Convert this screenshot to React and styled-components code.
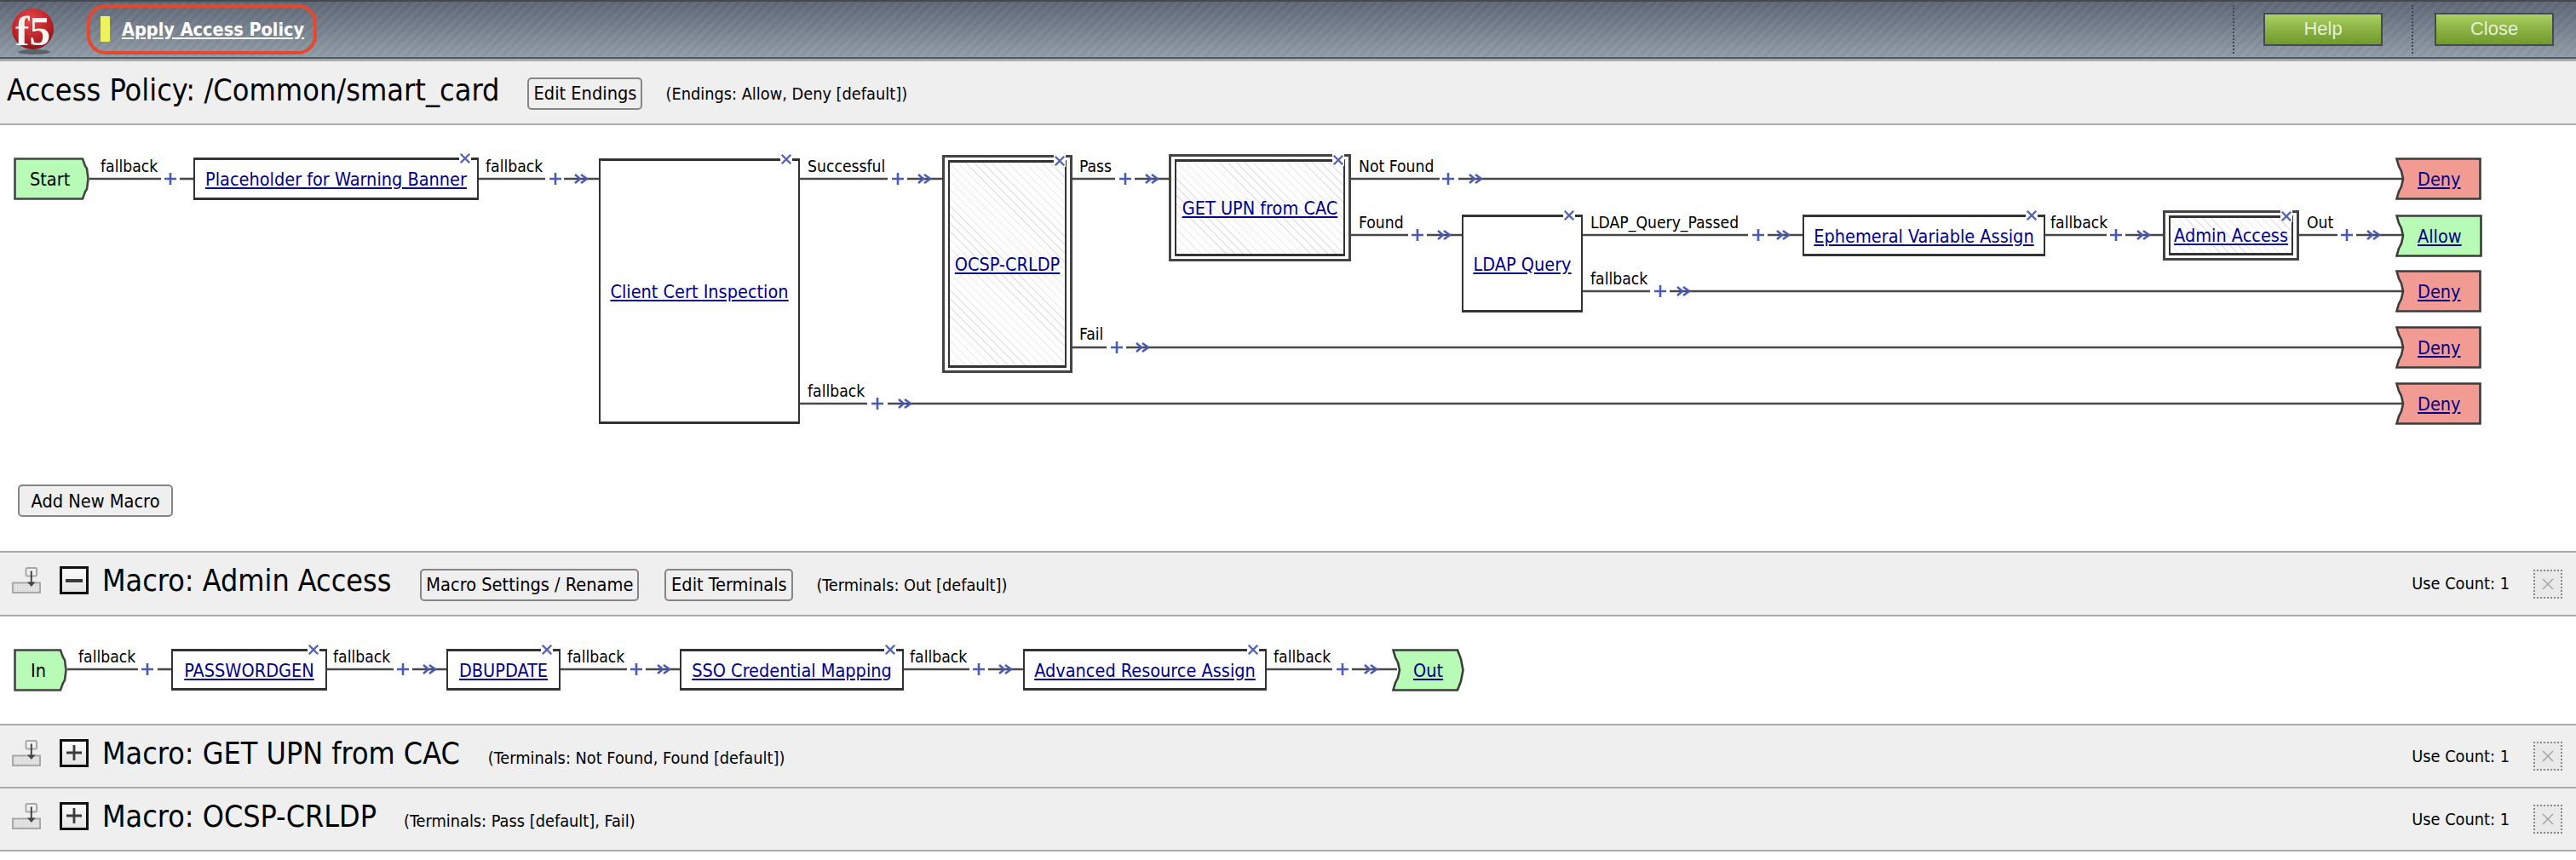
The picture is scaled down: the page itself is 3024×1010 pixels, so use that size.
import React from "react";
import styled, { createGlobalStyle } from "styled-components";

const UI_FONT = `"DejaVu Sans Condensed", "DejaVu Sans", sans-serif`;

const Global = createGlobalStyle`
  html, body { margin: 0; padding: 0; background: #fff; }
  body { font-family: ${UI_FONT}; color: #000; }
  #root { width: 3024px; height: 1010px; overflow: hidden; }
  * { box-sizing: border-box; }
`;

const Page = styled.div`
  display: flex;
  flex-direction: column;
  width: 3024px;
`;

const Banner = styled.header`
  display: flex;
  align-items: center;
  height: 72px;
  padding: 0 26px 3px 14px;
  border-top: 2px solid #45494f;
  border-bottom: 3px solid #aaaaaa;
  box-shadow: inset 0 -2px 0 #4d5966;
  background:
    repeating-linear-gradient(135deg, rgba(255,255,255,0.035) 0 4px, rgba(0,0,0,0.025) 4px 8px),
    linear-gradient(180deg, #5d6776 0%, #939ea9 100%);
`;

const LogoMark = styled.svg`
  width: 52px;
  height: 62px;
  flex: none;
  overflow: visible;
`;

const ApplyChip = styled.div`
  display: flex;
  align-items: center;
  gap: 14px;
  width: 270px;
  height: 59px;
  margin-left: 36px;
  padding-left: 12px;
  border: 4px solid #e8472b;
  border-radius: 22px;
`;

const ApplyFlag = styled.span`
  width: 11px;
  height: 30px;
  background: #eef25c;
`;

const ApplyLink = styled.a`
  color: #fff;
  font-size: 21.5px;
  font-weight: 700;
  text-decoration: underline;
  white-space: nowrap;
`;

const Spacer = styled.div`
  flex: 1;
`;

const BannerDivider = styled.span`
  width: 0;
  height: 57px;
  margin-right: ${(p) => p.$gap}px;
  border-left: 2px dotted #3e4650;
`;

const BannerButton = styled.button`
  width: 140px;
  height: 39px;
  margin-right: ${(p) => p.$after}px;
  padding: 0;
  border: 2px solid #444a4f;
  background: linear-gradient(180deg, #a9d163 0%, #8cb546 45%, #6f9a2c 100%);
  color: #e6efd3;
  font-family: "Liberation Sans", Arial, sans-serif;
  font-size: 22px;
`;

const TitleBar = styled.div`
  display: flex;
  align-items: center;
  height: 75px;
  padding: 0 0 0 8px;
  background: #efefef;
  border-bottom: 2px solid #aaaaaa;
`;

const PageTitle = styled.h1`
  margin: 0 33px 0 0;
  font-size: 35.8px;
  font-weight: 400;
  white-space: nowrap;
  position: relative;
  top: -3px;
`;

const GhostButton = styled.button`
  height: 38px;
  width: ${(p) => p.$w}px;
  margin-top: 2px;
  margin-right: ${(p) => p.$after}px;
  padding: 0;
  background: #efefef;
  border: 2px solid #858585;
  border-radius: 5px;
  color: #000;
  font-family: ${UI_FONT};
  font-size: 21.6px;
  white-space: nowrap;
`;

const Note = styled.span`
  margin-top: 4px;
  font-size: 19.8px;
  white-space: nowrap;
`;

const MainArea = styled.section`
  height: 500px;
  background: #fff;
`;

const Diagram = styled.div`
  position: relative;
  height: ${(p) => p.$h}px;
`;

const MacroFoot = styled.div`
  padding-left: 21px;
`;

const Wires = styled.svg`
  position: absolute;
  left: 0;
  top: 0;
  pointer-events: none;
`;

const Step = styled.div`
  position: absolute;
  left: ${(p) => p.$x}px;
  top: ${(p) => p.$y}px;
  width: ${(p) => p.$w}px;
  height: ${(p) => p.$h}px;
  display: flex;
  align-items: center;
  justify-content: center;
  padding-top: 1px;
  background: #fff;
  border: 2px solid #333;
  border-top-width: 3px;
  border-bottom-width: 3px;
`;

const MacroStep = styled(Step)`
  padding: 3px 4px;
  background: #fff;
  border-width: 3px;
  border-color: #444;
`;

const MacroInner = styled.div`
  display: flex;
  align-items: center;
  justify-content: center;
  width: 100%;
  height: 100%;
  border: 2px solid #333;
  border-top-width: 3px;
  border-bottom-width: 3px;
  background: repeating-linear-gradient(45deg, #fff 0 6px, #e4e4e4 6px 7px);
`;

const StepLink = styled.a`
  color: #00008b;
  font-size: 21.5px;
  text-decoration: underline;
  white-space: nowrap;
`;

const Remove = styled.svg`
  position: absolute;
  top: ${(p) => p.$top}px;
  right: ${(p) => p.$right}px;
  width: 14px;
  height: 14px;
  background: #fff;
`;

const Terminal = styled.div`
  position: absolute;
  left: ${(p) => p.$x}px;
  top: ${(p) => p.$y}px;
  width: ${(p) => p.$w}px;
  height: 50px;
  display: flex;
  align-items: center;
  padding-left: ${(p) => p.$pad}px;
  padding-top: 1px;
  font-size: 21.5px;
`;

const TerminalShape = styled.svg`
  position: absolute;
  left: 0;
  top: 0;
  width: 100%;
  height: 100%;
`;

const TerminalText = styled.span`
  position: relative;
`;

const TerminalLink = styled(StepLink)`
  position: relative;
`;

const EdgeLabel = styled.span`
  position: absolute;
  left: ${(p) => p.$x}px;
  top: ${(p) => p.$y}px;
  font-size: 19.2px;
  line-height: 22px;
  white-space: nowrap;
`;

const MacroBar = styled.div`
  display: flex;
  align-items: center;
  height: ${(p) => p.$h}px;
  padding: 0 16px 0 14px;
  background: #efefef;
  border-top: ${(p) => (p.$top ? "2px solid #aaaaaa" : "0")};
  border-bottom: 2px solid #aaaaaa;
`;

const GlyphSlot = styled.svg`
  width: 34px;
  height: 31px;
  margin-bottom: 8px;
  flex: none;
`;

const ToggleBox = styled.span`
  display: flex;
  align-items: center;
  justify-content: center;
  width: 34px;
  height: 33px;
  margin: 0 16px 8px 22px;
  border: 3px solid #111;
  background: linear-gradient(180deg, #fbfbfb, #e4e4e4);
`;

const MacroTitle = styled.h2`
  margin: 0 ${(p) => p.$after}px 0 0;
  font-size: 35.6px;
  font-weight: 400;
  white-space: nowrap;
  position: relative;
  top: -4px;
`;

const UseCount = styled.span`
  margin-right: 28px;
  font-size: 19.8px;
  white-space: nowrap;
`;

const DeleteBox = styled.span`
  display: flex;
  align-items: center;
  justify-content: center;
  width: 34px;
  height: 34px;
  border: 2px dotted #888;
  background: #e9e9e9;
`;

const F5Logo = () => (
  <LogoMark viewBox="0 0 52 62">
    <defs>
      <radialGradient id="f5ball" cx="0.42" cy="0.28" r="0.78">
        <stop offset="0" stopColor="#e6474a" />
        <stop offset="0.6" stopColor="#bb2226" />
        <stop offset="1" stopColor="#7f1216" />
      </radialGradient>
    </defs>
    <ellipse cx="26" cy="58" rx="19" ry="3" fill="#3a3d43" opacity="0.6" />
    <ellipse cx="24.5" cy="31" rx="24.5" ry="24" fill="url(#f5ball)" />
    <text x="4" y="50" fontFamily="Liberation Serif, serif" fontWeight="700" fontSize="48" fill="#f8f4f2" textLength="41" lengthAdjust="spacingAndGlyphs">f5</text>
  </LogoMark>
);

const RemoveIcon = ({ top = -9, right = 7 }) => (
  <Remove viewBox="0 0 16 16" $top={top} $right={right}>
    <path d="M2 2 L14 14 M14 2 L2 14" stroke="#5564b5" strokeWidth="2.8" fill="none" />
  </Remove>
);

const Plus = ({ x, y }) => (
  <path d={`M${x - 7} ${y} H${x + 7} M${x} ${y - 7} V${y + 7}`} stroke="#4a5bb5" strokeWidth="2.6" fill="none" />
);

const Chevrons = ({ x, y }) => (
  <path d={`M${x - 8} ${y - 5} L${x - 2} ${y} L${x - 8} ${y + 5} M${x - 1} ${y - 5} L${x + 6} ${y} L${x - 1} ${y + 5}`} stroke="#4a5bb5" strokeWidth="2.6" fill="none" />
);

const WireLayer = ({ w, h, offset, lines, pluses, arrows }) => (
  <Wires width={w} height={h} viewBox={`0 ${offset} ${w} ${h}`}>
    {lines.map(([x1, x2, y], i) => (
      <line key={i} x1={x1} x2={x2} y1={y} y2={y} stroke="#484848" strokeWidth="2.6" />
    ))}
    {pluses.map(([x, y], i) => (
      <Plus key={i} x={x} y={y} />
    ))}
    {arrows.map(([x, y], i) => (
      <Chevrons key={i} x={x} y={y} />
    ))}
  </Wires>
);

const StartShape = ({ w, fill }) => (
  <TerminalShape viewBox={`0 0 ${w} 50`}>
    <path
      d={`M1.5 1.5 H${w - 8} L${w - 5} 10 L${w - 3} 13 L${w - 1.5} 25 L${w - 3} 37 L${w - 5} 40 L${w - 8} 48.5 H1.5 Z`}
      fill={fill}
      stroke="#444"
      strokeWidth="2.6"
    />
  </TerminalShape>
);

const EndShape = ({ w, fill }) => (
  <TerminalShape viewBox={`0 0 ${w} 50`}>
    <path
      d={`M1.5 1.5 H${w - 1.5} V48.5 H1.5 L4 40 L7 34 L9 25 L7 16 L4 10 Z`}
      fill={fill}
      stroke="#3c3c3c"
      strokeWidth="2.6"
    />
  </TerminalShape>
);

const SOURCE = "#b7fbb6";
const DENY = "#f29b93";

const MAIN_TOP = 147;
const mainSteps = [
  { x: 227, y: 185, w: 335, h: 50, label: "Placeholder for Warning Banner" },
  { x: 703, y: 186, w: 236, h: 312, label: "Client Cert Inspection" },
  { x: 1716, y: 252, w: 142, h: 115, label: "LDAP Query" },
  { x: 2116, y: 252, w: 285, h: 49, label: "Ephemeral Variable Assign" },
];
const mainMacros = [
  { x: 1106, y: 182, w: 153, h: 256, label: "OCSP-CRLDP" },
  { x: 1372, y: 181, w: 214, h: 126, label: "GET UPN from CAC" },
  { x: 2539, y: 247, w: 160, h: 59, label: "Admin Access" },
];
const mainEnds = [
  { y: 185, w: 101, label: "Deny", fill: DENY },
  { y: 252, w: 102, label: "Allow", fill: SOURCE },
  { y: 317, w: 101, label: "Deny", fill: DENY },
  { y: 383, w: 101, label: "Deny", fill: DENY },
  { y: 449, w: 101, label: "Deny", fill: DENY },
];
const mainLabels = [
  ["fallback", 118, 196], ["fallback", 570, 196], ["Successful", 948, 196],
  ["fallback", 948, 460], ["Pass", 1267, 196], ["Fail", 1267, 393],
  ["Not Found", 1595, 196], ["Found", 1595, 262], ["LDAP_Query_Passed", 1867, 262],
  ["fallback", 1867, 328], ["fallback", 2407, 262], ["Out", 2708, 262],
];
const mainLines = [
  [105, 189, 210], [211, 228, 210], [562, 640, 210], [662, 703, 210],
  [939, 1042, 210], [1065, 1106, 210], [939, 1018, 474], [1042, 2821, 474],
  [1259, 1309, 210], [1332, 1372, 210], [1259, 1299, 408], [1322, 2821, 408],
  [1586, 1690, 210], [1712, 2821, 210], [1586, 1653, 276], [1675, 1716, 276],
  [1858, 2052, 276], [2075, 2116, 276], [1858, 1937, 342], [1960, 2821, 342],
  [2401, 2473, 276], [2495, 2539, 276], [2699, 2744, 276], [2766, 2821, 276],
];
const mainPluses = [
  [200, 210], [652, 210], [1054, 210], [1030, 474], [1321, 210], [1311, 408],
  [1700, 210], [1664, 276], [2064, 276], [1949, 342], [2484, 276], [2755, 276],
];
const mainArrows = [
  [683, 210], [1086, 210], [1063, 474], [1353, 210], [1342, 408], [1733, 210],
  [1696, 276], [2094, 276], [1977, 342], [2517, 276], [2787, 276],
];

const ADMIN_TOP = 724;
const adminSteps = [
  { x: 201, y: 762, w: 183, h: 49, label: "PASSWORDGEN" },
  { x: 524, y: 762, w: 134, h: 49, label: "DBUPDATE" },
  { x: 798, y: 762, w: 263, h: 49, label: "SSO Credential Mapping" },
  { x: 1201, y: 762, w: 286, h: 49, label: "Advanced Resource Assign" },
];
const adminLabels = [
  ["fallback", 92, 762], ["fallback", 391, 762], ["fallback", 666, 762],
  ["fallback", 1068, 762], ["fallback", 1495, 762],
];
const adminLines = [
  [79, 162, 786], [185, 201, 786], [384, 462, 786], [484, 524, 786],
  [658, 736, 786], [758, 798, 786], [1061, 1138, 786], [1160, 1201, 786],
  [1487, 1564, 786], [1587, 1640, 786],
];
const adminPluses = [[173, 786], [473, 786], [747, 786], [1149, 786], [1576, 786]];
const adminArrows = [[505, 786], [780, 786], [1181, 786], [1610, 786]];

const PlusMinus = ({ open }) => (
  <svg width="24" height="24" viewBox="0 0 24 24">
    <path d={open ? "M2 12 H22" : "M3 12 H21 M12 3 V21"} stroke="#3a3a3a" strokeWidth={open ? 4 : 2.8} fill="none" />
  </svg>
);

const MacroGlyph = () => (
  <GlyphSlot viewBox="0 0 34 31">
    <defs>
      <pattern id="trayHatch" width="3" height="3" patternUnits="userSpaceOnUse">
        <rect width="3" height="3" fill="#e6e6e6" />
        <rect width="1.5" height="1.5" fill="#cfcfcf" />
      </pattern>
    </defs>
    <rect x="1" y="18.5" width="32" height="11.5" fill="url(#trayHatch)" stroke="#a8a8a8" strokeWidth="2" />
    <rect x="16.5" y="1" width="12.5" height="9.5" rx="1.5" fill="#f1f1f1" stroke="#a8a8a8" strokeWidth="2" />
    <path d="M22.8 4.5 V19" stroke="#444" strokeWidth="2" />
    <path d="M18 17.5 L22.8 23 L27.5 17.5 Z" fill="#444" />
  </GlyphSlot>
);

const CrossGlyph = () => (
  <svg width="18" height="18" viewBox="0 0 18 18">
    <path d="M3 3 L15 15 M15 3 L3 15" stroke="#9f9f9f" strokeWidth="1.4" fill="none" />
  </svg>
);

const MacroHeader = ({ h, top, open, title, after, children }) => (
  <MacroBar $h={h} $top={top}>
    <MacroGlyph />
    <ToggleBox>
      <PlusMinus open={open} />
    </ToggleBox>
    <MacroTitle $after={after}>{title}</MacroTitle>
    {children}
    <Spacer />
    <UseCount>Use Count: 1</UseCount>
    <DeleteBox>
      <CrossGlyph />
    </DeleteBox>
  </MacroBar>
);

function OutShape() {
  const w = 85;
  return (
    <TerminalShape viewBox={`0 0 ${w} 50`}>
      <path
        d={`M1.5 1.5 H${w - 8} L${w - 4} 12 L${w - 1.5} 25 L${w - 4} 38 L${w - 8} 48.5 H1.5 L4 40 L7 34 L9 25 L7 16 L4 10 Z`}
        fill={SOURCE}
        stroke="#3c3c3c"
        strokeWidth="2.6"
      />
    </TerminalShape>
  );
}

export default function App() {
  return (
    <Page>
      <Global />
      <Banner>
        <F5Logo />
        <ApplyChip>
          <ApplyFlag />
          <ApplyLink href="#">Apply Access Policy</ApplyLink>
        </ApplyChip>
        <Spacer />
        <BannerDivider $gap={34} />
        <BannerButton $after={34}>Help</BannerButton>
        <BannerDivider $gap={25} />
        <BannerButton $after={0}>Close</BannerButton>
      </Banner>

      <TitleBar>
        <PageTitle>Access Policy: /Common/smart_card</PageTitle>
        <GhostButton $w={135} $after={27}>Edit Endings</GhostButton>
        <Note>(Endings: Allow, Deny [default])</Note>
      </TitleBar>

      <MainArea>
        <Diagram $h={420}>
          <WireLayer w={3024} h={420} offset={MAIN_TOP} lines={mainLines} pluses={mainPluses} arrows={mainArrows} />
          <Terminal $x={16} $y={185 - MAIN_TOP} $w={89} $pad={19}>
            <StartShape w={89} fill={SOURCE} />
            <TerminalText>Start</TerminalText>
          </Terminal>
          {mainSteps.map((s) => (
            <Step key={s.label} $x={s.x} $y={s.y - MAIN_TOP} $w={s.w} $h={s.h}>
              <StepLink href="#">{s.label}</StepLink>
              <RemoveIcon />
            </Step>
          ))}
          {mainMacros.map((s) => (
            <MacroStep key={s.label} $x={s.x} $y={s.y - MAIN_TOP} $w={s.w} $h={s.h}>
              <MacroInner>
                <StepLink href="#">{s.label}</StepLink>
              </MacroInner>
              <RemoveIcon top={-3} right={5} />
            </MacroStep>
          ))}
          {mainEnds.map((e) => (
            <Terminal key={e.y} $x={2812} $y={e.y - MAIN_TOP} $w={e.w} $pad={26}>
              <EndShape w={e.w} fill={e.fill} />
              <TerminalLink href="#">{e.label}</TerminalLink>
            </Terminal>
          ))}
          {mainLabels.map(([t, x, y]) => (
            <EdgeLabel key={t + x + y} $x={x} $y={y - 11 - MAIN_TOP}>{t}</EdgeLabel>
          ))}
        </Diagram>
        <MacroFoot>
          <GhostButton $w={182} $after={0}>Add New Macro</GhostButton>
        </MacroFoot>
      </MainArea>

      <MacroHeader h={77} top open title="Macro: Admin Access" after={34}>
        <GhostButton $w={257} $after={30}>Macro Settings / Rename</GhostButton>
        <GhostButton $w={151} $after={27}>Edit Terminals</GhostButton>
        <Note>(Terminals: Out [default])</Note>
      </MacroHeader>

      <Diagram $h={126}>
        <WireLayer w={3024} h={126} offset={ADMIN_TOP} lines={adminLines} pluses={adminPluses} arrows={adminArrows} />
        <Terminal $x={16} $y={762 - ADMIN_TOP} $w={63} $pad={20}>
          <StartShape w={63} fill={SOURCE} />
          <TerminalText>In</TerminalText>
        </Terminal>
        {adminSteps.map((s) => (
          <Step key={s.label} $x={s.x} $y={s.y - ADMIN_TOP} $w={s.w} $h={s.h}>
            <StepLink href="#">{s.label}</StepLink>
            <RemoveIcon />
          </Step>
        ))}
        <Terminal $x={1634} $y={762 - ADMIN_TOP} $w={85} $pad={25}>
          <OutShape />
          <TerminalLink href="#">Out</TerminalLink>
        </Terminal>
        {adminLabels.map(([t, x, y]) => (
          <EdgeLabel key={t + x} $x={x} $y={y - 1 - ADMIN_TOP}>{t}</EdgeLabel>
        ))}
      </Diagram>

      <MacroHeader h={76} top title="Macro: GET UPN from CAC" after={33}>
        <Note>(Terminals: Not Found, Found [default])</Note>
      </MacroHeader>
      <MacroHeader h={74} title="Macro: OCSP-CRLDP" after={32}>
        <Note>(Terminals: Pass [default], Fail)</Note>
      </MacroHeader>
    </Page>
  );
}
